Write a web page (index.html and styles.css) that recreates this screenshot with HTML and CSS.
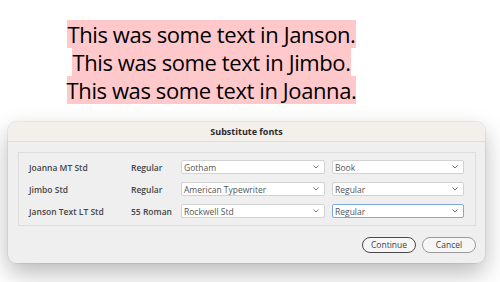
FILE: index.html
```html
<!DOCTYPE html>
<html>
<head>
<meta charset="utf-8">
<link rel="stylesheet" href="styles.css">
</head>
<body>
<div class="sample">
  <div class="line"><span>This was some text in Janson.</span></div>
  <div class="line"><span>This was some text in Jimbo.</span></div>
  <div class="line"><span>This was some text in Joanna.</span></div>
</div>
<div class="dialog">
  <div class="titlebar">Substitute fonts</div>
  <div class="body">
    <div class="panel">
      <div class="row">
        <span class="name">Joanna MT Std</span>
        <span class="style">Regular</span>
        <div class="select wide"><span>Gotham</span><svg class="chev" width="6" height="4" viewBox="0 0 6 4"><polyline points="0.5,0.5 3,3 5.5,0.5" fill="none" stroke="#777" stroke-width="1"/></svg></div>
        <div class="select narrow"><span>Book</span><svg class="chev" width="6" height="4" viewBox="0 0 6 4"><polyline points="0.5,0.5 3,3 5.5,0.5" fill="none" stroke="#777" stroke-width="1"/></svg></div>
      </div>
      <div class="row">
        <span class="name">Jimbo Std</span>
        <span class="style">Regular</span>
        <div class="select wide"><span>American Typewriter</span><svg class="chev" width="6" height="4" viewBox="0 0 6 4"><polyline points="0.5,0.5 3,3 5.5,0.5" fill="none" stroke="#777" stroke-width="1"/></svg></div>
        <div class="select narrow"><span>Regular</span><svg class="chev" width="6" height="4" viewBox="0 0 6 4"><polyline points="0.5,0.5 3,3 5.5,0.5" fill="none" stroke="#777" stroke-width="1"/></svg></div>
      </div>
      <div class="row">
        <span class="name">Janson Text LT Std</span>
        <span class="style">55 Roman</span>
        <div class="select wide"><span>Rockwell Std</span><svg class="chev" width="6" height="4" viewBox="0 0 6 4"><polyline points="0.5,0.5 3,3 5.5,0.5" fill="none" stroke="#777" stroke-width="1"/></svg></div>
        <div class="select narrow focus"><span>Regular</span><svg class="chev" width="6" height="4" viewBox="0 0 6 4"><polyline points="0.5,0.5 3,3 5.5,0.5" fill="none" stroke="#777" stroke-width="1"/></svg></div>
      </div>
    </div>
    <div class="buttons">
      <div class="btn primary">Continue</div>
      <div class="btn">Cancel</div>
    </div>
  </div>
</div>
</body>
</html>
```
FILE: styles.css
```css
html, body {
  margin: 0;
  padding: 0;
  background: #ffffff;
  width: 500px;
  height: 282px;
  overflow: hidden;
}
.sample {
  width: 423px;
  padding-top: 20px;
  text-align: center;
  font-family: "Open Sans", sans-serif;
  font-size: 22px;
  color: #000;
}
.line {
  height: 28px;
  line-height: 28px;
}
.line span {
  background: #ffc9cc;
  display: inline-block;
  height: 28px;
  letter-spacing: -0.4px;
}
.dialog {
  margin-top: 18px;
  margin-left: 8px;
  width: 477px;
  height: 141px;
  border-radius: 8px;
  background: #efefef;
  box-shadow: 0 10px 24px rgba(0,0,0,0.28), 0 0 0 0.5px rgba(0,0,0,0.12);
  font-family: "Open Sans", sans-serif;
  overflow: hidden;
}
.titlebar {
  height: 19px;
  line-height: 19px;
  background: #f3efeb;
  border-bottom: 1px solid #e2ddd8;
  text-align: center;
  font-weight: bold;
  font-size: 9px;
  color: #2a2a2a;
}
.body {
  padding: 10px 9px 0 10px;
}
.panel {
  border: 1px solid #dedede;
  padding: 7px 11px 0 10px;
  box-sizing: border-box;
  height: 74px;
  display: flex;
  flex-direction: column;
  gap: 8px;
}
.row {
  display: flex;
  align-items: center;
  height: 14px;
  font-size: 8.5px;
  color: #464646;
  font-weight: 600;
}
.name {
  width: 102px;
}
.style {
  width: 50px;
}
.select {
  box-sizing: border-box;
  height: 14px;
  background: #fff;
  border: 1px solid #d2d2d2;
  border-radius: 2px;
  display: flex;
  align-items: center;
  justify-content: space-between;
  padding: 0 5px 0 2px;
  color: #555;
  font-size: 8.5px;
  font-weight: 400;
}
.select.wide {
  width: 144px;
  margin-right: 7px;
}
.select.narrow {
  width: 132px;
}
.select.focus {
  border-color: #7fa8e6;
}
.chev {
  display: block;
}
.buttons {
  display: flex;
  justify-content: flex-end;
  gap: 6px;
  margin-top: 11px;
}
.btn {
  box-sizing: border-box;
  width: 54px;
  height: 16px;
  line-height: 14px;
  border: 1px solid #9a9a9a;
  border-radius: 8px;
  background: #f6f6f6;
  text-align: center;
  font-size: 8.5px;
  color: #444;
}
.btn.primary {
  border-color: #4a4a4a;
}
```
